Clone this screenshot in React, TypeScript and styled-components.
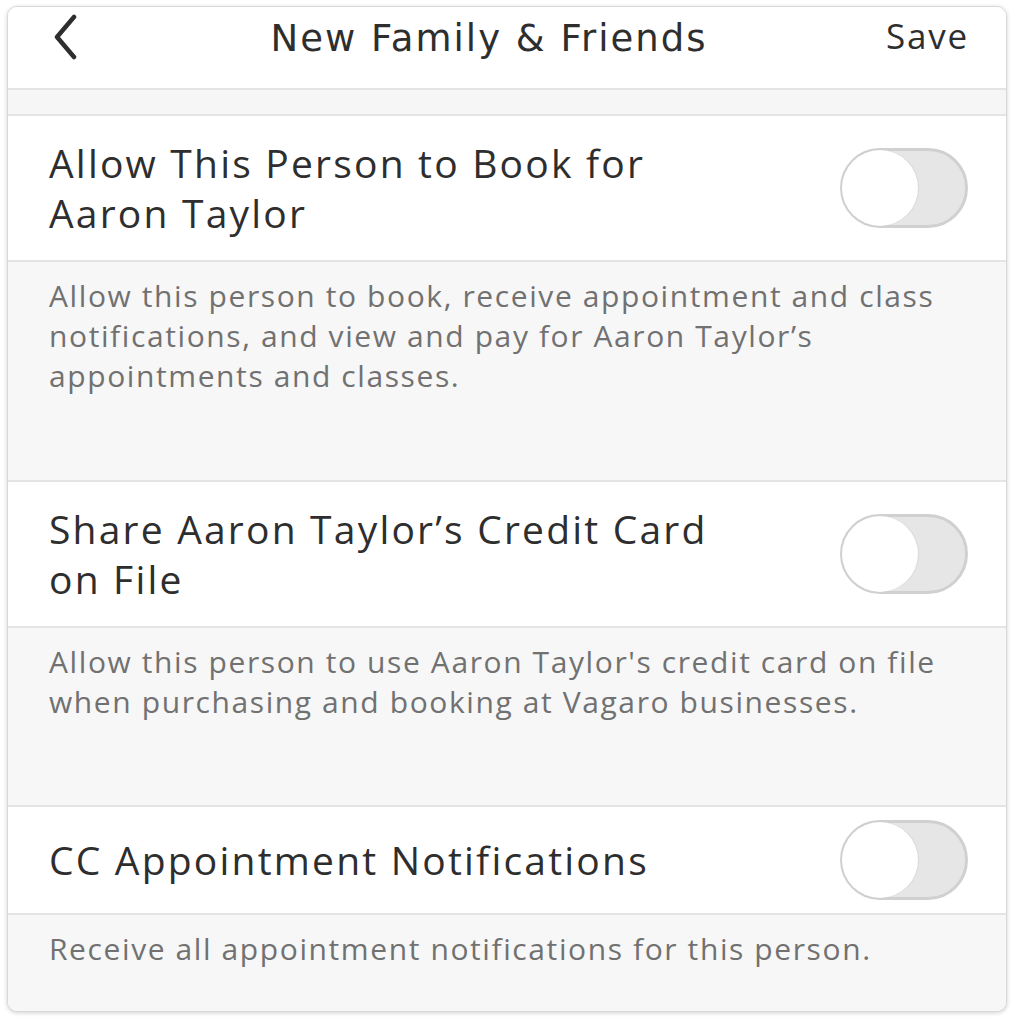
import React, { useState } from 'react';
import styled, { createGlobalStyle } from 'styled-components';

const GlobalStyle = createGlobalStyle`
  html, body {
    margin: 0;
    background: #ffffff;
  }
  body {
    padding: 6px 8px 7px 7px;
    font-family: "Open Sans", "Noto Sans", sans-serif;
  }
`;

const Card = styled.div`
  width: 1000px;
  height: 1006px;
  box-sizing: border-box;
  border: 1px solid #d9d9d9;
  border-radius: 10px;
  overflow: hidden;
  background: #f7f7f7;
  box-shadow: 0 1px 4px rgba(0, 0, 0, 0.18);
  display: flex;
  flex-direction: column;

  & > * {
    flex: none;
  }
`;

const Header = styled.header`
  height: 81px;
  display: grid;
  grid-template-columns: 92px 1fr 128px;
  align-items: start;
  background: #fff;
  border-bottom: 2px solid #e4e4e4;
`;

const Back = styled.button`
  border: 0;
  background: none;
  padding: 7px 0 0 44px;
  display: flex;
  cursor: pointer;
`;

const Title = styled.h1`
  margin: 0;
  padding-top: 12px;
  text-align: center;
  font-family: "DejaVu Sans", "Open Sans", sans-serif;
  font-size: 37px;
  line-height: 40px;
  font-weight: 400;
  color: #2e2e2e;
  letter-spacing: 2px;
  white-space: nowrap;
`;

const Save = styled.button`
  border: 0;
  background: none;
  justify-self: end;
  padding: 9px 37px 0 0;
  font-family: inherit;
  font-size: 35px;
  line-height: 40px;
  letter-spacing: 1.8px;
  color: #2e2e2e;
  cursor: pointer;
`;

const Spacer = styled.div`
  height: 24px;
  background: #f6f6f6;
  border-bottom: 2px solid #e4e4e4;
`;

const Row = styled.div`
  box-sizing: border-box;
  padding: 13px 38px 13px 41px;
  display: flex;
  align-items: center;
  justify-content: space-between;
  background: #fff;
  border-bottom: 2px solid #e4e4e4;
`;

const Label = styled.div`
  padding: 9px 0;
  font-size: 39px;
  line-height: 50px;
  color: #2e2e2e;
  letter-spacing: 2.2px;
`;

const Note = styled.div<{ $bottom: number }>`
  padding: 14px 58px ${(p) => p.$bottom}px 41px;
  font-size: 30px;
  line-height: 40px;
  color: #717171;
  letter-spacing: 1.6px;
  background: #f7f7f7;
  border-bottom: 2px solid #e4e4e4;
`;

const Track = styled.button<{ $on: boolean }>`
  position: relative;
  flex: none;
  width: 128px;
  height: 80px;
  box-sizing: border-box;
  padding: 0;
  border-radius: 40px;
  border: 3px solid ${(p) => (p.$on ? '#3fb96a' : '#d0d0d0')};
  background: ${(p) => (p.$on ? '#4cd964' : '#e6e6e6')};
  cursor: pointer;
`;

const Knob = styled.span<{ $on: boolean }>`
  position: absolute;
  top: -1px;
  left: ${(p) => (p.$on ? '47px' : '-1px')};
  width: 76px;
  height: 76px;
  border-radius: 50%;
  background: #fff;
  box-shadow: 1px 0 1px rgba(0, 0, 0, 0.06);
`;

const Toggle = () => {
  const [on, setOn] = useState(false);
  return (
    <Track $on={on} onClick={() => setOn(!on)}>
      <Knob $on={on} />
    </Track>
  );
};

const settings = [
  {
    label: ['Allow This Person to Book for', 'Aaron Taylor'],
    note: 'Allow this person to book, receive appointment and class notifications, and view and pay for Aaron Taylor\u2019s appointments and classes.',
    bottom: 84,
  },
  {
    label: ['Share Aaron Taylor\u2019s Credit Card', 'on File'],
    note: "Allow this person to use Aaron Taylor's credit card on file when purchasing and booking at Vagaro businesses.",
    bottom: 83,
  },
  {
    label: ['CC Appointment Notifications'],
    note: 'Receive all appointment notifications for this person.',
    bottom: 83,
  },
];

export default function App() {
  return (
    <>
      <GlobalStyle />
      <Card>
        <Header>
          <Back aria-label="Back">
            <svg width="26" height="46" viewBox="0 0 26 46">
              <path d="M22 3 L5 23 L22 43" fill="none" stroke="#2e2e2e" strokeWidth="4.5" strokeLinecap="round" strokeLinejoin="round" />
            </svg>
          </Back>
          <Title>New Family &amp; Friends</Title>
          <Save>Save</Save>
        </Header>
        <Spacer />
        {settings.map((s) => (
          <React.Fragment key={s.label[0]}>
            <Row>
              <Label>
                {s.label.map((l) => (
                  <div key={l}>{l}</div>
                ))}
              </Label>
              <Toggle />
            </Row>
            <Note $bottom={s.bottom}>{s.note}</Note>
          </React.Fragment>
        ))}
      </Card>
    </>
  );
}
